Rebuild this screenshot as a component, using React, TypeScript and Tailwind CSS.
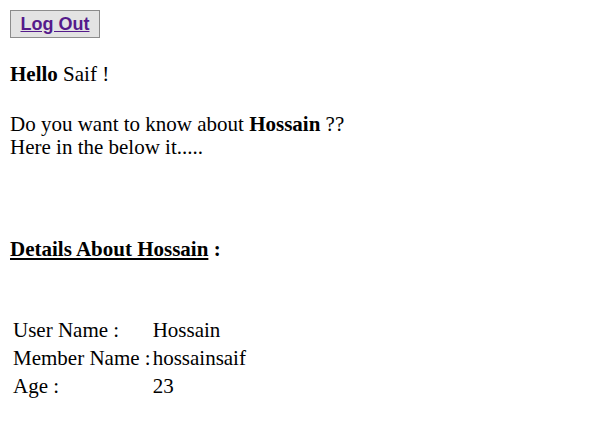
export default function App() {
  const rows = [
    { label: "User Name :", value: "Hossain" },
    { label: "Member Name :", value: "hossainsaif" },
    { label: "Age :", value: "23" },
  ];

  return (
    <div className="min-h-[423px] bg-white px-[10px] pt-[10px] text-[21px] leading-[23px] text-black font-['Liberation_Serif',serif]">
      <button className="h-[28px] w-[90px] border border-[#8c8c8c] bg-[#e3e3e3] font-['Liberation_Sans',Arial,sans-serif] text-[18px] font-bold leading-none text-[#551a8b] underline">
        Log Out
      </button>

      <p className="mt-[25px]">
        <b>Hello</b> Saif !
      </p>

      <p className="mt-[27px]">
        Do you want to know about <b>Hossain</b> ??
        <br />
        Here in the below it.....
      </p>

      <p className="mt-[79px]">
        <b className="underline">Details About Hossain</b> <b>:</b>
      </p>

      <table className="mt-[54px] border-separate border-spacing-[2px]">
        <tbody>
          {rows.map((row) => (
            <tr key={row.label} className="h-[26px]">
              <td className="p-px pr-0 align-middle whitespace-nowrap">{row.label}</td>
              <td className="p-px pl-0 align-middle">{row.value}</td>
            </tr>
          ))}
        </tbody>
      </table>
    </div>
  );
}
